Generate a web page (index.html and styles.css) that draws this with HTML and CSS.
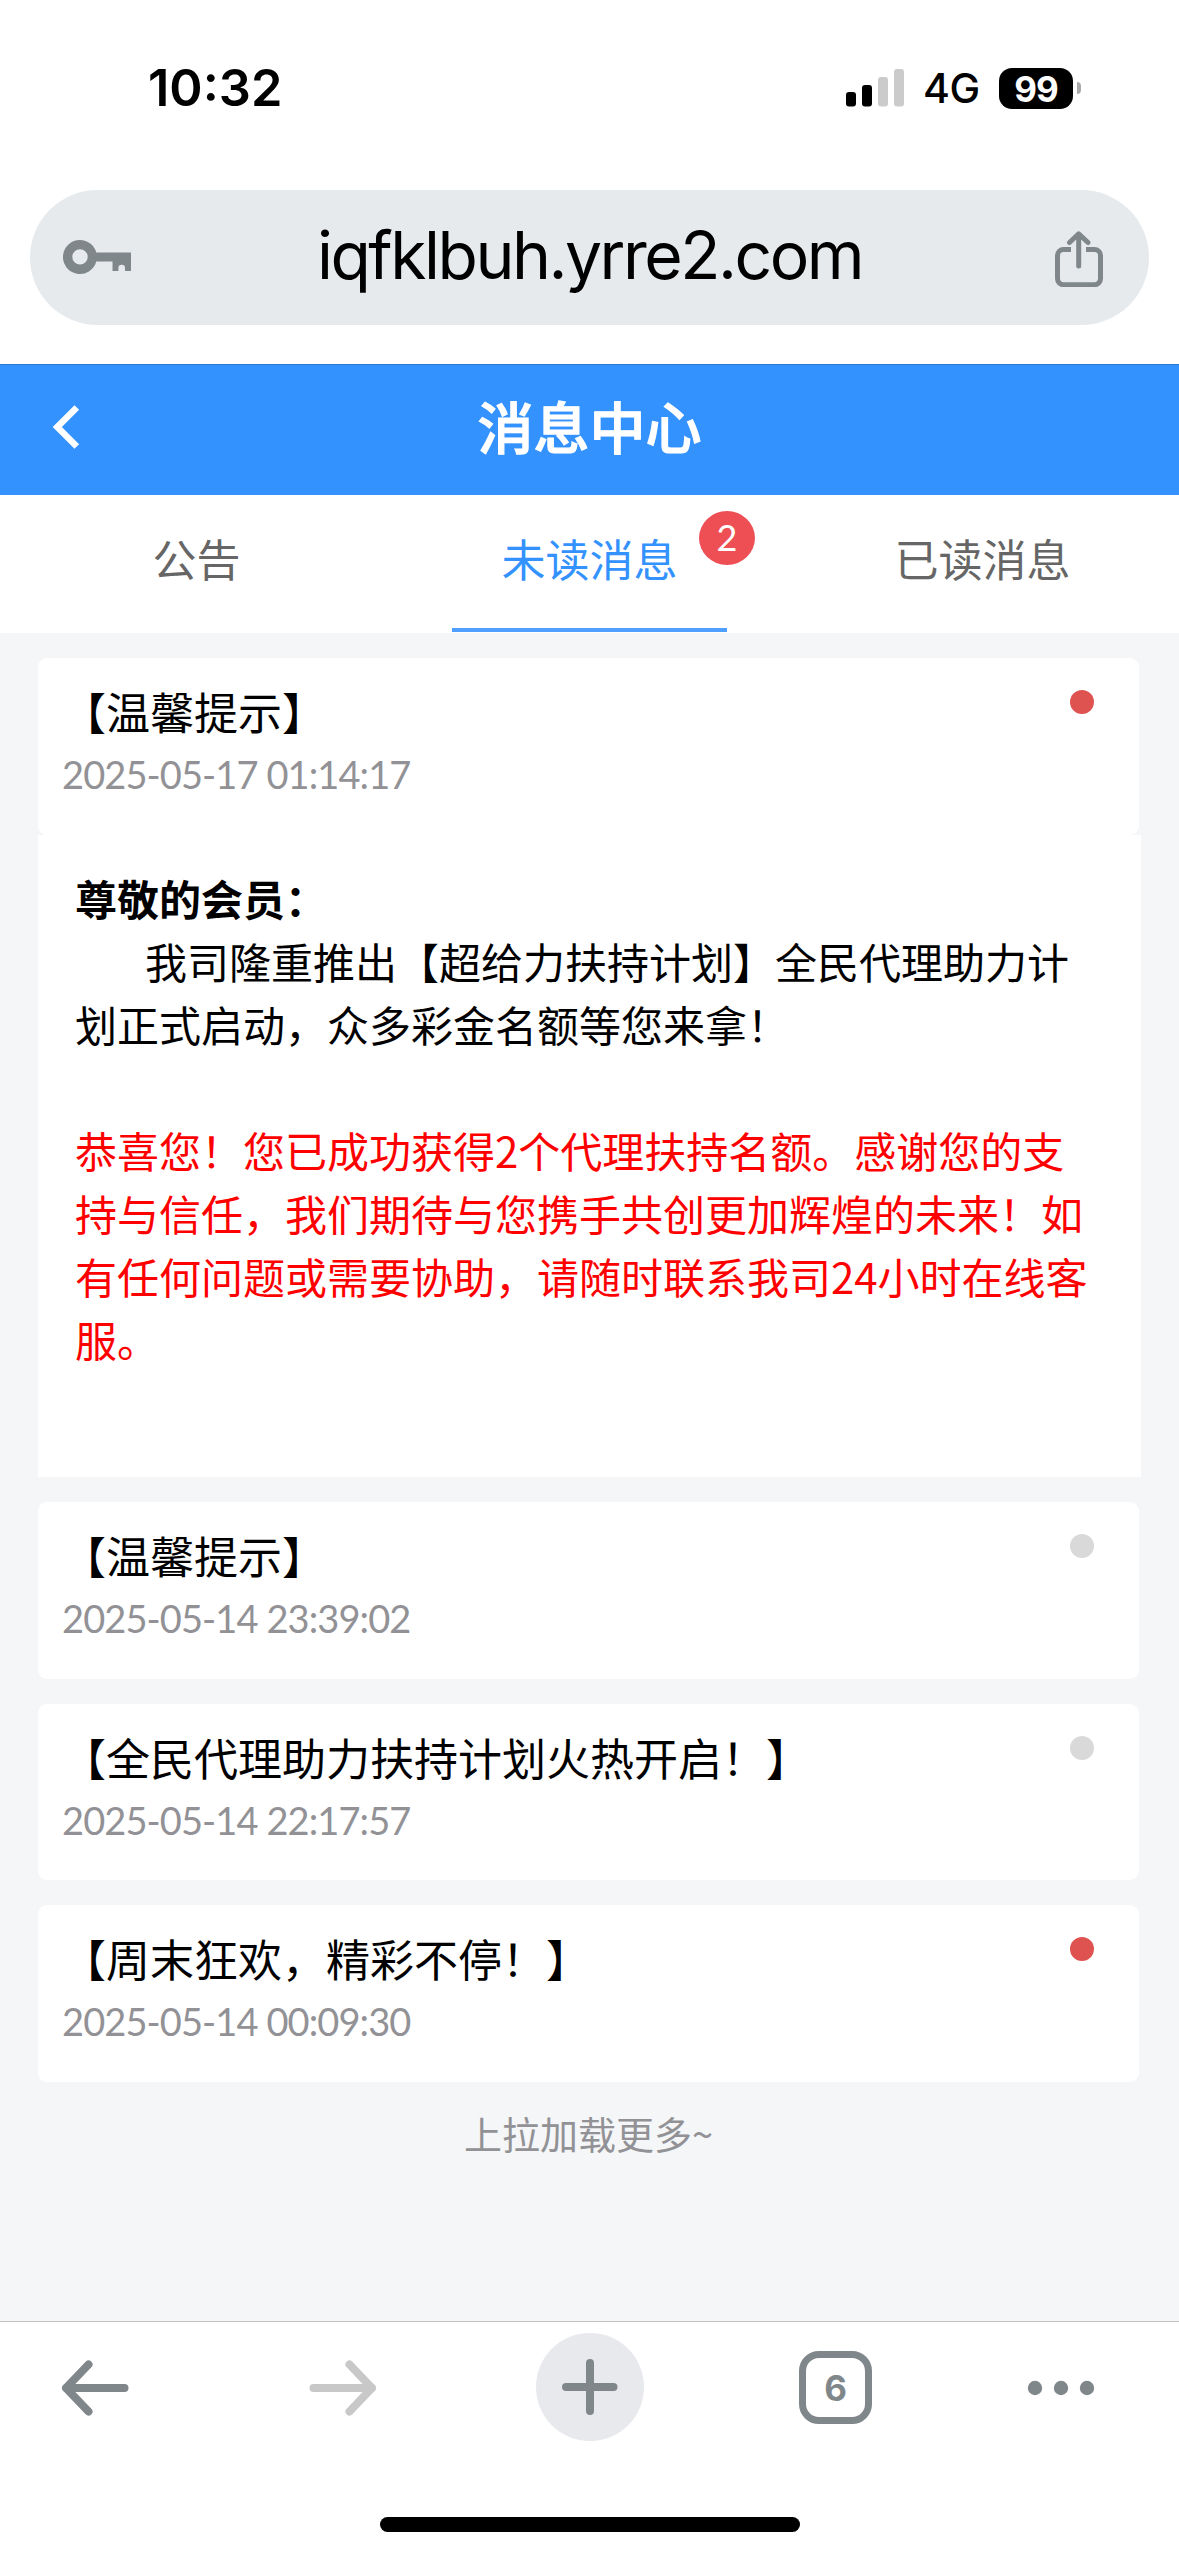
FILE: index.html
```html
<!DOCTYPE html>
<html lang="zh-CN">
<head>
<meta charset="utf-8">
<title>消息中心</title>
<link rel="stylesheet" href="styles.css">
</head>
<body>
<div class="screen">
  <div class="status-bar">
    <span class="clock">10:32</span>
    <div class="status-icons">
      <svg class="signal" width="58" height="38" viewBox="0 0 58 38">
        <rect x="0" y="23" width="10" height="14.5" rx="3"/>
        <rect x="16" y="16" width="10" height="21.5" rx="3"/>
        <rect class="off" x="32" y="8" width="10" height="29.5" rx="3"/>
        <rect class="off" x="48" y="0" width="10" height="37.5" rx="3"/>
      </svg>
      <span class="network">4G</span>
      <span class="battery">99</span>
      <span class="battery-tip"></span>
    </div>
  </div>

  <div class="address">
    <svg class="key" width="68" height="35" viewBox="0 0 68 35">
      <path fill-rule="evenodd" d="M17 0a17 17 0 0 1 16.300 12.500H68V31H62V28a3.300 3.300 0 0 0-6.600 0V31H49.500V21.500H33.300A17 17 0 1 1 17 0zM17 9.200a7.700 7.700 0 1 0 0 15.400a7.700 7.700 0 0 0 0-15.400z"/>
    </svg>
    <span class="url">iqfklbuh.yrre2.com</span>
    <svg class="share" width="50" height="58" viewBox="0 0 50 58">
      <path d="M17 20.500H9.500a6 6 0 0 0-6 6V49.800a6 6 0 0 0 6 6H40.500a6 6 0 0 0 6-6V26.500a6 6 0 0 0-6-6H32"/>
      <path stroke-linecap="round" d="M24.700 37V5M15.500 13.500L24.700 4.800L34 13.500"/>
    </svg>
  </div>

  <header class="page-head">
    <svg class="back" width="32" height="50" viewBox="0 0 32 50"><path d="M26.800 5.500L7.300 25L26.800 44.500"/></svg>
    <h1 class="page-title">消息中心</h1>
  </header>

  <nav class="tabs">
    <div class="tab">公告</div>
    <div class="tab active">未读消息<span class="badge">2</span></div>
    <div class="tab">已读消息</div>
  </nav>

  <main class="list">
    <section class="message">
      <div class="card">
        <div class="card-text"><h2 class="card-title">【温馨提示】</h2><time class="card-time">2025-05-17 01:14:17</time></div>
        <span class="dot unread"></span>
      </div>
      <div class="detail">
        <p class="greeting">尊敬的会员：</p>
        <p class="indent">我司隆重推出【超给力扶持计划】全民代理助力计划正式启动，众多彩金名额等您来拿！</p>
        <p class="notice">恭喜您！您已成功获得2个代理扶持名额。感谢您的支持与信任，我们期待与您携手共创更加辉煌的未来！如有任何问题或需要协助，请随时联系我司24小时在线客服。</p>
      </div>
    </section>
    <section class="message">
      <div class="card">
        <div class="card-text"><h2 class="card-title">【温馨提示】</h2><time class="card-time">2025-05-14 23:39:02</time></div>
        <span class="dot"></span>
      </div>
    </section>
    <section class="message">
      <div class="card">
        <div class="card-text"><h2 class="card-title">【全民代理助力扶持计划火热开启！】</h2><time class="card-time">2025-05-14 22:17:57</time></div>
        <span class="dot"></span>
      </div>
    </section>
    <section class="message">
      <div class="card">
        <div class="card-text"><h2 class="card-title">【周末狂欢，精彩不停！】</h2><time class="card-time">2025-05-14 00:09:30</time></div>
        <span class="dot unread"></span>
      </div>
    </section>
    <p class="more">上拉加载更多~</p>
  </main>

  <footer class="toolbar">
    <div class="tools">
      <svg class="prev" width="68" height="56" viewBox="0 0 68 56"><path d="M63.500 28H5M27.500 4.500L5 28L27.500 51.500"/></svg>
      <svg class="next" width="68" height="56" viewBox="0 0 68 56"><path d="M4.500 28H63M40.500 4.500L63 28L40.500 51.500"/></svg>
      <span class="new-tab"><svg width="56" height="56" viewBox="0 0 56 56"><path d="M4 28H51.500M28 4V52"/></svg></span>
      <span class="tab-count">6</span>
      <svg class="menu" width="68" height="16" viewBox="0 0 68 16"><circle cx="8" cy="8" r="7.200"/><circle cx="34" cy="8" r="7.200"/><circle cx="60" cy="8" r="7.200"/></svg>
    </div>
    <div class="home-bar"></div>
  </footer>
</div>
</body>
</html>
```
FILE: styles.css
```css
* {
  box-sizing: border-box;
  margin: 0;
  padding: 0;
}

body {
  background: #fff;
  color: #000;
  font-family: "Noto Sans CJK SC", sans-serif;
  text-spacing-trim: space-all;
}

svg {
  display: block;
}

.screen {
  display: flex;
  flex-direction: column;
  width: 1179px;
  height: 2556px;
  overflow: hidden;
}

/* phone status bar */
.status-bar {
  display: flex;
  flex-shrink: 0;
  justify-content: space-between;
  height: 190px;
  padding: 58px 98px 0 148px;
  font-family: Inter, sans-serif;
}

.clock {
  height: 60px;
  line-height: 60px;
  font-size: 50.500px;
  font-weight: 600;
}

.status-icons {
  display: flex;
  align-items: center;
  height: 60px;
}

.signal .off {
  fill: #cbcbcb;
}

.network {
  width: 95px;
  padding-left: 19px;
  font-size: 41px;
  font-weight: 500;
  letter-spacing: -0.500px;
  line-height: 60px;
}

.battery {
  width: 74px;
  height: 41px;
  border-radius: 13px;
  background: #000;
  color: #fff;
  font-size: 35px;
  font-weight: 700;
  letter-spacing: -1px;
  line-height: 42px;
  text-align: center;
}

.battery-tip {
  width: 4px;
  height: 12px;
  margin-left: 4px;
  border-radius: 0 4px 4px 0;
  background: #a8a8a8;
}

/* browser address bar */
.address {
  display: grid;
  flex-shrink: 0;
  grid-template-columns: 1fr auto 1fr;
  align-items: center;
  height: 135px;
  margin: 0 30px 39px;
  padding: 0 45px 0 33px;
  border-radius: 68px;
  background: #e6eaed;
}

.key {
  fill: #80878b;
}

.url {
  margin: -5px 0 0 12px;
  font-family: Inter, sans-serif;
  font-size: 66px;
  line-height: 80px;
  letter-spacing: -2.500px;
}

.share {
  justify-self: end;
  fill: none;
  stroke: #80878b;
  stroke-width: 5;
  stroke-linejoin: round;
}

/* page header */
.page-head {
  display: grid;
  flex-shrink: 0;
  grid-template-columns: 1fr auto 1fr;
  align-items: center;
  height: 131px;
  padding: 0 50px 7px;
  border-top: 1px solid #2c78cc;
  background: #3492ff;
  color: #fff;
}

.back {
  fill: none;
  stroke: #fff;
  stroke-width: 6.500;
}

.page-title {
  margin-top: -3px;
  font-size: 56px;
  font-weight: 500;
  line-height: 80px;
  -webkit-text-stroke: 1.200px #fff;
}

.tabs {
  display: grid;
  flex-shrink: 0;
  grid-template-columns: repeat(3, 1fr);
  justify-items: center;
  height: 138px;
  color: #666;
  font-size: 44px;
  line-height: 126px;
}

.tab {
  position: relative;
  width: 275px;
  text-align: center;
}

.tab.active {
  margin-bottom: 1px;
  border-bottom: 4px solid #4f9fff;
  color: #3492ff;
}

.badge {
  position: absolute;
  top: 16px;
  right: -28px;
  width: 56px;
  height: 54px;
  border-radius: 50%;
  background: #ed4f55;
  color: #fff;
  font-family: Lato, sans-serif;
  font-size: 36px;
  line-height: 52px;
}

/* message list */
.list {
  flex: 1;
  padding: 25px 38px 0;
  background: #f5f6f8;
}

.message {
  margin-bottom: 25px;
}

.card {
  display: flex;
  justify-content: space-between;
  width: 1101px;
  height: 176.500px;
  padding: 32px 45px 0 24px;
  border-radius: 9px;
  background: #fff;
}

.card-title {
  margin-top: -2px;
  font-size: 44px;
  font-weight: 400;
  line-height: 46px;
}

.card-time {
  display: block;
  margin-top: 17px;
  color: #929296;
  font-family: Lato, sans-serif;
  font-size: 38px;
  letter-spacing: -0.900px;
  line-height: 46px;
}

.dot {
  width: 24px;
  height: 24px;
  border-radius: 50%;
  background: #d9d9d9;
}

.dot.unread {
  background: #de534f;
}

.detail {
  width: 1103px;
  height: 642.500px;
  padding: 31px 37px;
  background: #fff;
  font-size: 42px;
  line-height: 63px;
}

.greeting {
  font-weight: 700;
}

.indent {
  text-indent: 70px;
}

.notice {
  margin-top: 63px;
  color: #f00;
}

.more {
  margin-top: -2px;
  padding-right: 2px;
  color: #929296;
  font-size: 38px;
  line-height: 56px;
  text-align: center;
}

/* browser toolbar */
.toolbar {
  flex-shrink: 0;
  height: 235px;
  border-top: 1px solid #c2c3c5;
  background: #fff;
}

.tools {
  display: flex;
  align-items: center;
  gap: 155px;
  height: 131px;
  padding-left: 61px;
  fill: none;
  stroke: #80878b;
  stroke-width: 8;
  stroke-linecap: round;
  stroke-linejoin: round;
}

.prev {
  margin-right: 25px;
}

.next {
  margin-right: 4px;
  stroke: #c8c8c8;
}

.new-tab {
  display: grid;
  place-items: center;
  width: 108px;
  height: 108px;
  margin-top: -2px;
  border-radius: 50%;
  background: #e8e9ed;
}

.tab-count {
  width: 73px;
  height: 73px;
  border: 7px solid #80878b;
  border-radius: 20px;
  color: #80878b;
  font-family: Inter, sans-serif;
  font-size: 35px;
  font-weight: 700;
  line-height: 60px;
  text-align: center;
}

.menu {
  fill: #80878b;
  stroke: none;
}

.home-bar {
  width: 420px;
  height: 15px;
  margin: 64px auto 0;
  border-radius: 8px;
  background: #000;
}
```
